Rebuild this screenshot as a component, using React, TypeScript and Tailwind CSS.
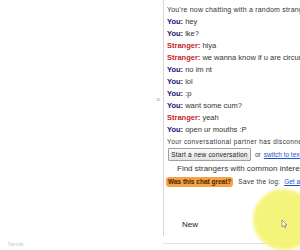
import React from "react";

type Msg = { who: "You" | "Stranger"; text: string };

const messages: Msg[] = [
  { who: "You", text: "hey" },
  { who: "You", text: "lke?" },
  { who: "Stranger", text: "hiya" },
  { who: "Stranger", text: "we wanna know if u are circumcised" },
  { who: "You", text: "no im nt" },
  { who: "You", text: "lol" },
  { who: "You", text: ":p" },
  { who: "You", text: "want some cum?" },
  { who: "Stranger", text: "yeah" },
  { who: "You", text: "open ur mouths :P" },
];

export default function App() {
  return (
    <div
      className="relative flex h-[250px] w-[300px] overflow-hidden bg-white text-[#222]"
      style={{ fontFamily: '"Liberation Sans", Arial, sans-serif' }}
    >
      {/* left blank area with drag handle + faint status */}
      <div className="flex w-[163px] shrink-0 flex-col">
        <div className="flex h-[240px] items-start justify-end pr-[3px] pt-[96px]">
          <span className="text-[7px] leading-[7px] text-[#aaa]">≡</span>
        </div>
        <div className="pl-[8px] text-[6px] leading-[8px] text-[#c8c8c8]">Neval</div>
      </div>

      {/* chat panel */}
      <div className="flex h-[244px] flex-1 flex-col border-b border-[#e2e2e2]">
        <div className="flex h-[236px] flex-col whitespace-nowrap border-l border-[#d6d6d6] pl-[3px] pt-[4px]">
          <div className="h-[12px] text-[7px] leading-[12px] tracking-[0.2px] text-[#333]">
            You're now chatting with a random stranger. Say hi!
          </div>
          {messages.map((m, i) => (
            <div key={i} className="h-[12px] text-[7.5px] leading-[12px] text-[#333]">
              <span
                className={
                  m.who === "You"
                    ? "font-bold text-[#14146e]"
                    : "font-bold text-[#c41f1f]"
                }
              >
                {m.who}:
              </span>{" "}
              {m.text}
            </div>
          ))}
          <div className="h-[11px] text-[6.5px] leading-[11px] tracking-[0.4px] text-[#333]">
            Your conversational partner has disconnected.
          </div>

          <div className="flex h-[15px] items-center text-[6.5px]">
            <span className="ml-[1px] flex h-[13px] w-[83px] items-center justify-center rounded-[1px] border border-[#9aa0a6] bg-gradient-to-b from-[#fbfbfb] to-[#e4e4e4] text-[6.5px] tracking-[0.2px] text-[#222]">
              Start a new conversation
            </span>
            <span className="ml-[4px] text-[#444]">or</span>
            <span className="ml-[3px] text-[#1f4fd1] underline">switch to text</span>
          </div>

          <div className="h-[14px] pl-[10px] text-[8px] leading-[14px] text-[#333]">
            Find strangers with common interests
          </div>

          <div className="flex h-[12px] items-center text-[6.5px]">
            <span className="-ml-[1px] flex h-[10px] items-center rounded-[3px] bg-[#f6a348] px-[2px] font-bold text-[#4a2300]">
              Was this chat great?
            </span>
            <span className="ml-[5px] tracking-[0.3px] text-[#333]">Save the log:</span>
            <span className="ml-[4px] text-[#1f4fd1] underline">Get a link</span>
          </div>

          <div className="mt-[31px] pl-[15px] text-[8px] leading-[12px] text-[#222]">New</div>
        </div>
      </div>

      {/* cursor highlight */}
      <div className="pointer-events-none absolute left-[253px] top-[189px] h-[61px] w-[61px] rounded-full bg-[#f4f36c] opacity-90 blur-[1.5px]" />
      <svg className="absolute left-[281px] top-[219px]" width="7" height="10" viewBox="0 0 7 10">
        <path d="M1 1 L1 8 L2.8 6.3 L4 9 L5 8.5 L3.9 6 L6 6 Z" fill="#fff" stroke="#777" strokeWidth="0.7" />
      </svg>
    </div>
  );
}
